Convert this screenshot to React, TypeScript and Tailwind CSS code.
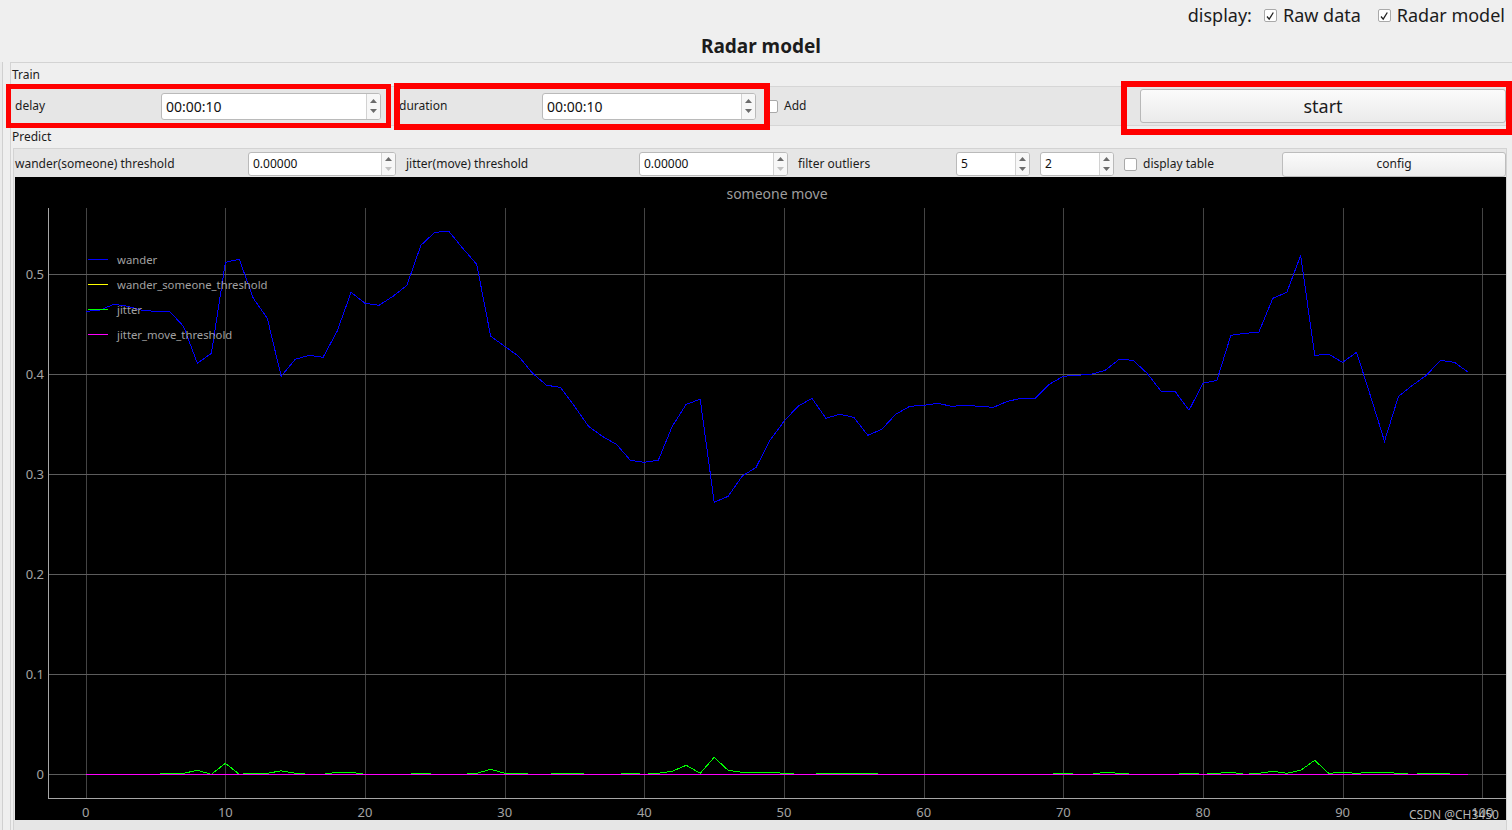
import type { ReactNode } from 'react';

const wander = [
    0.463, 0.464, 0.47, 0.468, 0.464, 0.463, 0.463, 0.448, 0.411, 0.421,
    0.512, 0.515, 0.476, 0.456, 0.398, 0.415, 0.419, 0.417, 0.443, 0.482,
    0.471, 0.469, 0.478, 0.489, 0.529, 0.542, 0.543, 0.526, 0.51, 0.438,
    0.428, 0.418, 0.401, 0.389, 0.387, 0.368, 0.348, 0.338, 0.33, 0.314,
    0.312, 0.314, 0.348, 0.37, 0.375, 0.272, 0.278, 0.298, 0.307, 0.334,
    0.353, 0.368, 0.376, 0.356, 0.36, 0.357, 0.339, 0.345, 0.36, 0.368,
    0.369, 0.371, 0.368, 0.369, 0.368, 0.367, 0.373, 0.376, 0.376, 0.39,
    0.398, 0.399, 0.4, 0.404, 0.415, 0.414, 0.401, 0.383, 0.383, 0.364,
    0.391, 0.394, 0.439, 0.441, 0.442, 0.476, 0.482, 0.519, 0.419, 0.42,
    0.412, 0.422, 0.378, 0.333, 0.378, 0.389, 0.399, 0.414, 0.412, 0.402,
];

// jitter is zero almost everywhere, only a few small bumps
const jitterBumps: Record<number, number> = {
    6: 0.001, 7: 0.001, 8: 0.004, 10: 0.011, 12: 0.001, 13: 0.001, 14: 0.0035, 15: 0.001,
    18: 0.002, 19: 0.002, 24: 0.001, 28: 0.001, 29: 0.005, 30: 0.001, 31: 0.001, 34: 0.001,
    35: 0.001, 39: 0.001, 41: 0.001, 42: 0.003, 43: 0.009, 44: 0.001, 45: 0.017, 46: 0.004,
    47: 0.002, 48: 0.002, 49: 0.002, 50: 0.001, 53: 0.001, 54: 0.001, 55: 0.001, 56: 0.001,
    70: 0.001, 73: 0.002, 74: 0.001, 79: 0.001, 81: 0.001, 82: 0.002, 84: 0.001, 85: 0.003,
    86: 0.001, 87: 0.004, 88: 0.014, 89: 0.001, 90: 0.002, 91: 0.001, 92: 0.002, 93: 0.002,
    94: 0.001, 96: 0.001, 97: 0.001,
};
const jitter = Array.from({ length: 100 }, (_, i) => jitterBumps[i] ?? 0);
const zeros = Array.from({ length: 100 }, () => 0);

const X = (i: number) => 70.7 + 13.966 * i;
const Y = (v: number) => 597.3 - 1000 * v;
const crisp = (n: number) => Math.round(n) + 0.5;
const toPoints = (data: number[]) => data.map((v, i) => `${X(i).toFixed(1)},${Y(v).toFixed(1)}`).join(' ');

const legend = [
    { label: 'wander', color: '#0000ff' },
    { label: 'wander_someone_threshold', color: '#ffff00' },
    { label: 'jitter', color: '#00ff00' },
    { label: 'jitter_move_threshold', color: '#ff00ff' },
];

function Arrow({ up, dim }: { up?: boolean; dim?: boolean }) {
    return (
        <svg width="7" height="4" viewBox="0 0 7 4">
            <path d={up ? 'M0 4 L3.5 0 L7 4 Z' : 'M0 0 L3.5 4 L7 0 Z'} fill={dim ? '#c2c2c2' : '#6b6b6b'} />
        </svg>
    );
}

function SpinBox({ value, className, textClass, downDim }: { value: string; className: string; textClass: string; downDim?: boolean }) {
    return (
        <div className={`flex shrink-0 overflow-hidden rounded-[3px] border border-[#bababa] bg-white ${className}`}>
            <div className={`flex flex-1 items-center pl-[4px] text-[#111] ${textClass}`}>{value}</div>
            <div className="flex w-[14px] flex-col items-center justify-center gap-[6px] border-l border-[#d2d2d2] bg-[#f7f7f7]">
                <Arrow up />
                <Arrow dim={downDim} />
            </div>
        </div>
    );
}

function CheckBox({ checked }: { checked?: boolean }) {
    return (
        <span className="flex h-[13px] w-[13px] shrink-0 items-center justify-center rounded-[2px] border border-[#a9a9a9] bg-white">
            {checked && (
                <svg width="10" height="10" viewBox="0 0 10 10">
                    <polyline points="2,5.5 4.2,8.2 8.3,1.5" fill="none" stroke="#222" strokeWidth="1.3" />
                </svg>
            )}
        </span>
    );
}

function Label({ children, className }: { children: ReactNode; className: string }) {
    return <span className={`shrink-0 text-[12px] text-[#1c1c1c] ${className}`}>{children}</span>;
}

function Chart() {
    return (
        <svg width="1491" height="643" className="block shrink-0 bg-black font-['Noto_Sans']" overflow="visible">
            {Array.from({ length: 11 }, (_, k) => (
                <line key={`v${k}`} x1={crisp(X(k * 10))} x2={crisp(X(k * 10))} y1={31} y2={621} stroke="#444" shapeRendering="crispEdges" />
            ))}
            {Array.from({ length: 6 }, (_, k) => (
                <line key={`h${k}`} x1={33.5} x2={1491} y1={crisp(Y(k / 10))} y2={crisp(Y(k / 10))} stroke="#5c5c5c" shapeRendering="crispEdges" />
            ))}
            <line x1={33.5} x2={33.5} y1={31} y2={621.5} stroke="#a6a6a6" shapeRendering="crispEdges" />
            <line x1={33.5} x2={1491} y1={621.5} y2={621.5} stroke="#a6a6a6" shapeRendering="crispEdges" />

            <text x={762} y={22} fontSize="14" fill="#9d9d9d" textAnchor="middle">someone move</text>

            {Array.from({ length: 6 }, (_, k) => (
                <text key={`yl${k}`} x={29} y={Y(k / 10) + 5} fontSize="13" fill="#a3a3a3" textAnchor="end">
                    {k === 0 ? '0' : `0.${k}`}
                </text>
            ))}
            {Array.from({ length: 11 }, (_, k) => (
                <text key={`xl${k}`} x={X(k * 10)} y={640} fontSize="13" fill="#a3a3a3" textAnchor="middle">
                    {k * 10}
                </text>
            ))}

            <polyline points={toPoints(wander)} fill="none" stroke="#0000ff" strokeWidth="1" shapeRendering="crispEdges" />
            <polyline points={toPoints(zeros)} fill="none" stroke="#ffff00" strokeWidth="1" shapeRendering="crispEdges" />
            <polyline points={toPoints(jitter)} fill="none" stroke="#00ff00" strokeWidth="1" shapeRendering="crispEdges" />
            <polyline points={toPoints(zeros)} fill="none" stroke="#ff00ff" strokeWidth="1" shapeRendering="crispEdges" />

            {legend.map((item, k) => (
                <g key={item.label}>
                    <line x1={73} x2={93} y1={82.5 + k * 25} y2={82.5 + k * 25} stroke={item.color} strokeWidth="1.2" shapeRendering="crispEdges" />
                    <text x={102} y={86.5 + k * 25} fontSize="11.3" fill="#a0a0a0">{item.label}</text>
                </g>
            ))}

            <text x={1394} y={642} fontSize="12" fill="#d9d9d9" fillOpacity="0.85">CSDN @CH3450</text>
        </svg>
    );
}

export default function App() {
    return (
        <div className="relative h-[830px] w-[1512px] overflow-hidden bg-[#efefef] font-['Noto_Sans'] text-[#1c1c1c]">
            <header className="flex h-[31px] items-center justify-end pr-[7px] text-[18px]">
                <span>display:</span>
                <span className="ml-[12px]"><CheckBox checked /></span>
                <span className="ml-[6px]">Raw data</span>
                <span className="ml-[17px]"><CheckBox checked /></span>
                <span className="ml-[6px]">Radar model</span>
            </header>

            <h1 className="flex h-[31px] items-center justify-center pl-[10px] text-[19px] font-bold">Radar model</h1>

            <div className="flex h-[768px]">
                <div className="w-[10px] shrink-0">
                    <div className="h-full w-[3px] border-r border-[#d0d0d0] bg-[#ebebeb]" />
                </div>

                <section className="flex min-w-0 flex-1 flex-col border-l border-t border-[#d3d3d3]">
                    <div className="flex h-[23px] items-center pl-[1px] text-[12px]">Train</div>
                    <div className="flex h-[40px] items-center border-y border-[#d6d6d6] bg-[#e6e6e6] pl-[4px]">
                        <Label className="w-[146px]">delay</Label>
                        <SpinBox value="00:00:10" className="h-[27px] w-[220px]" textClass="text-[14px]" />
                        <Label className="ml-[18px] w-[143px]">duration</Label>
                        <SpinBox value="00:00:10" className="h-[27px] w-[214px]" textClass="text-[14px]" />
                        <span className="ml-[9px]"><CheckBox /></span>
                        <Label className="ml-[6px]">Add</Label>
                        <div className="flex-1" />
                        <button className="mr-[6px] h-[34px] w-[366px] rounded-[3px] border border-[#b8b8b8] bg-linear-to-b from-[#fbfbfb] to-[#ebebeb] text-[18px] text-[#1c1c1c]">
                            start
                        </button>
                    </div>
                    <div className="flex h-[22px] items-center pl-[1px] text-[12px]">Predict</div>

                    <div className="ml-[2px] mr-[5px] flex flex-1 flex-col border-l border-r border-t border-[#d3d3d3] bg-[#e6e6e6] pl-[1px]">
                        <div className="flex h-[28px] shrink-0 items-center pt-[2px]">
                            <Label className="w-[233px]">wander(someone) threshold</Label>
                            <SpinBox value="0.00000" className="h-[24px] w-[148px]" textClass="text-[12px]" downDim />
                            <Label className="ml-[10px] w-[233px]">jitter(move) threshold</Label>
                            <SpinBox value="0.00000" className="h-[24px] w-[149px]" textClass="text-[12px]" downDim />
                            <Label className="ml-[10px] w-[158px]">filter outliers</Label>
                            <SpinBox value="5" className="h-[24px] w-[74px]" textClass="text-[12px]" />
                            <SpinBox value="2" className="ml-[10px] h-[24px] w-[74px]" textClass="text-[12px]" />
                            <span className="ml-[10px]"><CheckBox /></span>
                            <Label className="ml-[6px]">display table</Label>
                            <div className="flex-1" />
                            <button className="h-[25px] w-[224px] rounded-[3px] border border-[#bdbdbd] bg-linear-to-b from-[#fbfbfb] to-[#ececec] text-[12px] text-[#1c1c1c]">
                                config
                            </button>
                        </div>
                        <Chart />
                    </div>
                </section>
            </div>

            {/* red annotation frames drawn over the screenshot */}
            <div className="pointer-events-none absolute left-[6px] top-[84px] h-[44px] w-[385px] border-[5px] border-[#ff0000]" />
            <div className="pointer-events-none absolute left-[394px] top-[83px] h-[47px] w-[376px] border-[6px] border-[#ff0000]" />
            <div className="pointer-events-none absolute left-[1121px] top-[81px] h-[54px] w-[391px] border-[6px] border-[#ff0000]" />
        </div>
    );
}
